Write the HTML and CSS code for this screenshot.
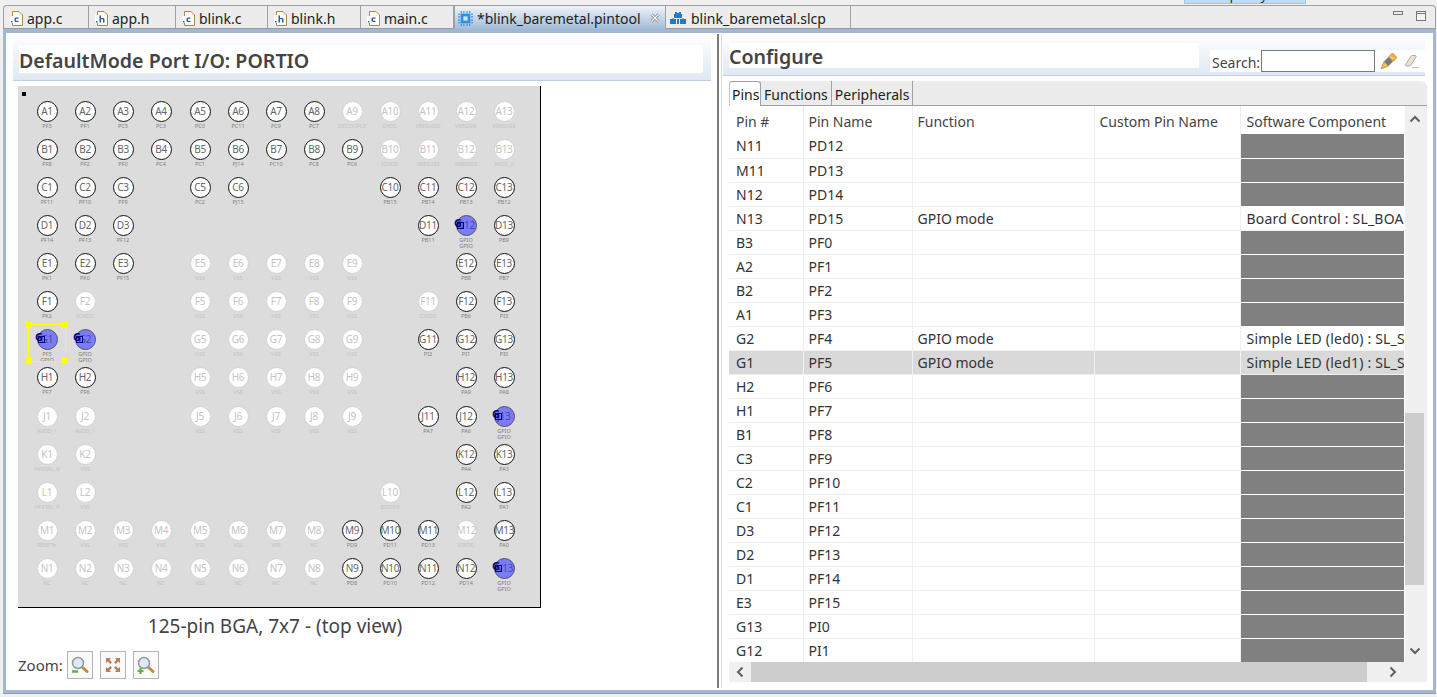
FILE: index.html
```html
<!DOCTYPE html>
<html lang="en">
<head>
  <meta charset="UTF-8" />
  <title>blink_baremetal.pintool</title>
  <link rel="stylesheet" href="styles.css">
</head>
<body>
  <svg class="defs" width="0" height="0">
    <symbol id="file-c" viewBox="0 0 13 15">
      <path d="M2.500 .5H9L12.500 4V14.500H2.500Z" fill="#fffdf2" stroke="#a98b45"/>
      <rect x="0" y="5" width="11" height="7" fill="#fff"/>
      <path d="M1 10h1.500v1.500H1zM8.500 6.500H5.500L4.500 7.500V10L5.500 11H8.500V9.800H6V7.700H8.500Z" fill="#2c5f9e"/>
    </symbol>
    <symbol id="file-h" viewBox="0 0 13 15">
      <path d="M2.500 .5H9L12.500 4V14.500H2.500Z" fill="#fffdf2" stroke="#a98b45"/>
      <rect x="0" y="4" width="11" height="8" fill="#fff"/>
      <path d="M1 10h1.500v1.500H1zM4.500 4.500H6V7H8.500L9.500 8V11.500H8V8.300H6V11.500H4.500Z" fill="#2c5f9e"/>
    </symbol>
  </svg>

  <div class="top-strip">
    <div class="perspective"><span>Simplicity IDE</span></div>
  </div>

  <div class="tab-bar">
    <div class="tab tab-c"><svg class="tab-icon"><use href="#file-c"/></svg>app.c</div>
    <div class="tab tab-h"><svg class="tab-icon"><use href="#file-h"/></svg>app.h</div>
    <div class="tab tab-bc"><svg class="tab-icon"><use href="#file-c"/></svg>blink.c</div>
    <div class="tab tab-bh"><svg class="tab-icon"><use href="#file-h"/></svg>blink.h</div>
    <div class="tab tab-m"><svg class="tab-icon"><use href="#file-c"/></svg>main.c</div>
    <div class="tab tab-active">
      <svg class="tab-icon chip" viewBox="0 0 14 14">
        <rect x="2.500" y="2.500" width="9" height="9" fill="#2f8fdc"/>
        <rect x="5" y="5" width="4" height="4" fill="#cfe6f8"/>
        <path d="M3 0v2M5.500 0v2M8.500 0v2M11 0v2M3 12v2M5.500 12v2M8.500 12v2M11 12v2M0 3h2M0 5.500h2M0 8.500h2M0 11h2M12 3h2M12 5.500h2M12 8.500h2M12 11h2" stroke="#2f8fdc"/>
      </svg>
      *blink_baremetal.pintool
      <svg class="tab-close" viewBox="0 0 10 10">
        <path d="M1.500 1.500L8.500 8.500M8.500 1.500L1.500 8.500" stroke="#8a8a8a" stroke-width="3"/>
        <path d="M1.500 1.500L8.500 8.500M8.500 1.500L1.500 8.500" stroke="#f4f7fa" stroke-width="1.200"/>
      </svg>
    </div>
    <div class="tab tab-slcp">
      <svg class="tab-icon lego" viewBox="0 0 16 12">
        <path d="M5 0h2v1h2V0h2v2h1v4H4V2h1ZM0 7h2v-.500h2V7h2v5H0ZM10 7h2v-.500h2V7h2v5h-6ZM7 7h2v5H7Z" fill="#1c7cc9"/>
      </svg>
      blink_baremetal.slcp
    </div>
    <div class="window-controls">
      <svg width="10" height="5"><rect x=".5" y=".5" width="9" height="3" fill="#eee" stroke="#777"/></svg>
      <svg width="10" height="10"><rect x=".5" y=".5" width="9" height="9" fill="#f4f4f4" stroke="#777"/><path d="M0 2.500h10" stroke="#777"/></svg>
    </div>
  </div>

  <div class="editor">
    <section class="pane-left">
      <div class="form-head"><h2>DefaultMode Port I/O: PORTIO</h2></div>

      <div class="board">
        <div class="pin-one"></div>
        <div class="pin-grid">
          <div class="pin on"><b>A1</b><span>PF3</span></div>
          <div class="pin on"><b>A2</b><span>PF1</span></div>
          <div class="pin on"><b>A3</b><span>PC5</span></div>
          <div class="pin on"><b>A4</b><span>PC3</span></div>
          <div class="pin on"><b>A5</b><span>PC0</span></div>
          <div class="pin on"><b>A6</b><span>PC11</span></div>
          <div class="pin on"><b>A7</b><span>PC9</span></div>
          <div class="pin on"><b>A8</b><span>PC7</span></div>
          <div class="pin"><b>A9</b><span>DECOUPLE</span></div>
          <div class="pin"><b>A10</b><span>DVDD</span></div>
          <div class="pin"><b>A11</b><span>VREGVDD</span></div>
          <div class="pin"><b>A12</b><span>VREGSW</span></div>
          <div class="pin"><b>A13</b><span>VREGVSS</span></div>

          <div class="pin on"><b>B1</b><span>PF8</span></div>
          <div class="pin on"><b>B2</b><span>PF2</span></div>
          <div class="pin on"><b>B3</b><span>PF0</span></div>
          <div class="pin on"><b>B4</b><span>PC4</span></div>
          <div class="pin on"><b>B5</b><span>PC1</span></div>
          <div class="pin on"><b>B6</b><span>PJ14</span></div>
          <div class="pin on"><b>B7</b><span>PC10</span></div>
          <div class="pin on"><b>B8</b><span>PC8</span></div>
          <div class="pin on"><b>B9</b><span>PC6</span></div>
          <div class="pin"><b>B10</b><span>IOVDD</span></div>
          <div class="pin"><b>B11</b><span>VREGVSS</span></div>
          <div class="pin"><b>B12</b><span>VREGVSS</span></div>
          <div class="pin"><b>B13</b><span>AVDD_0</span></div>

          <div class="pin on"><b>C1</b><span>PF11</span></div>
          <div class="pin on"><b>C2</b><span>PF10</span></div>
          <div class="pin on"><b>C3</b><span>PF9</span></div>
          <i></i>
          <div class="pin on"><b>C5</b><span>PC2</span></div>
          <div class="pin on"><b>C6</b><span>PJ15</span></div>
          <i></i><i></i><i></i>
          <div class="pin on"><b>C10</b><span>PB15</span></div>
          <div class="pin on"><b>C11</b><span>PB14</span></div>
          <div class="pin on"><b>C12</b><span>PB13</span></div>
          <div class="pin on"><b>C13</b><span>PB12</span></div>

          <div class="pin on"><b>D1</b><span>PF14</span></div>
          <div class="pin on"><b>D2</b><span>PF13</span></div>
          <div class="pin on"><b>D3</b><span>PF12</span></div>
          <i></i><i></i><i></i><i></i><i></i><i></i><i></i>
          <div class="pin on"><b>D11</b><span>PB11</span></div>
          <div class="pin gpio"><em>G</em><b>D12</b><span>GPIO<br>GPIO</span></div>
          <div class="pin on"><b>D13</b><span>PB9</span></div>

          <div class="pin on"><b>E1</b><span>PK1</span></div>
          <div class="pin on"><b>E2</b><span>PK0</span></div>
          <div class="pin on"><b>E3</b><span>PF15</span></div>
          <i></i>
          <div class="pin"><b>E5</b><span>VSS</span></div>
          <div class="pin"><b>E6</b><span>VSS</span></div>
          <div class="pin"><b>E7</b><span>VSS</span></div>
          <div class="pin"><b>E8</b><span>VSS</span></div>
          <div class="pin"><b>E9</b><span>VSS</span></div>
          <i></i><i></i>
          <div class="pin on"><b>E12</b><span>PB8</span></div>
          <div class="pin on"><b>E13</b><span>PB7</span></div>

          <div class="pin on"><b>F1</b><span>PK2</span></div>
          <div class="pin"><b>F2</b><span>IOVDD</span></div>
          <i></i><i></i>
          <div class="pin"><b>F5</b><span>VSS</span></div>
          <div class="pin"><b>F6</b><span>VSS</span></div>
          <div class="pin"><b>F7</b><span>VSS</span></div>
          <div class="pin"><b>F8</b><span>VSS</span></div>
          <div class="pin"><b>F9</b><span>VSS</span></div>
          <i></i>
          <div class="pin"><b>F11</b><span>IOVDD</span></div>
          <div class="pin on"><b>F12</b><span>PB6</span></div>
          <div class="pin on"><b>F13</b><span>PI3</span></div>

          <div class="pin gpio"><em>G</em><b>G1</b><span>PF5<br>GPIO</span></div>
          <div class="pin gpio"><em>G</em><b>G2</b><span>GPIO<br>GPIO</span></div>
          <i></i><i></i>
          <div class="pin"><b>G5</b><span>VSS</span></div>
          <div class="pin"><b>G6</b><span>VSS</span></div>
          <div class="pin"><b>G7</b><span>VSS</span></div>
          <div class="pin"><b>G8</b><span>VSS</span></div>
          <div class="pin"><b>G9</b><span>VSS</span></div>
          <i></i>
          <div class="pin on"><b>G11</b><span>PI2</span></div>
          <div class="pin on"><b>G12</b><span>PI1</span></div>
          <div class="pin on"><b>G13</b><span>PI0</span></div>

          <div class="pin on"><b>H1</b><span>PF7</span></div>
          <div class="pin on"><b>H2</b><span>PF6</span></div>
          <i></i><i></i>
          <div class="pin"><b>H5</b><span>VSS</span></div>
          <div class="pin"><b>H6</b><span>VSS</span></div>
          <div class="pin"><b>H7</b><span>VSS</span></div>
          <div class="pin"><b>H8</b><span>VSS</span></div>
          <div class="pin"><b>H9</b><span>VSS</span></div>
          <i></i><i></i>
          <div class="pin on"><b>H12</b><span>PA9</span></div>
          <div class="pin on"><b>H13</b><span>PA8</span></div>

          <div class="pin"><b>J1</b><span>AVDD_1</span></div>
          <div class="pin"><b>J2</b><span>AVDD_1</span></div>
          <i></i><i></i>
          <div class="pin"><b>J5</b><span>VSS</span></div>
          <div class="pin"><b>J6</b><span>VSS</span></div>
          <div class="pin"><b>J7</b><span>VSS</span></div>
          <div class="pin"><b>J8</b><span>VSS</span></div>
          <div class="pin"><b>J9</b><span>VSS</span></div>
          <i></i>
          <div class="pin on"><b>J11</b><span>PA7</span></div>
          <div class="pin on"><b>J12</b><span>PA6</span></div>
          <div class="pin gpio"><em>G</em><b>J13</b><span>GPIO<br>GPIO</span></div>

          <div class="pin"><b>K1</b><span>HFXTAL_N</span></div>
          <div class="pin"><b>K2</b><span>VSS</span></div>
          <i></i><i></i><i></i><i></i><i></i><i></i><i></i><i></i><i></i>
          <div class="pin on"><b>K12</b><span>PA4</span></div>
          <div class="pin on"><b>K13</b><span>PA3</span></div>

          <div class="pin"><b>L1</b><span>HFXTAL_P</span></div>
          <div class="pin"><b>L2</b><span>VSS</span></div>
          <i></i><i></i><i></i><i></i><i></i><i></i><i></i>
          <div class="pin"><b>L10</b><span>BODEN</span></div>
          <i></i>
          <div class="pin on"><b>L12</b><span>PA2</span></div>
          <div class="pin on"><b>L13</b><span>PA1</span></div>

          <div class="pin"><b>M1</b><span>RESETn</span></div>
          <div class="pin"><b>M2</b><span>VSS</span></div>
          <div class="pin"><b>M3</b><span>VSS</span></div>
          <div class="pin"><b>M4</b><span>VSS</span></div>
          <div class="pin"><b>M5</b><span>VSS</span></div>
          <div class="pin"><b>M6</b><span>VSS</span></div>
          <div class="pin"><b>M7</b><span>VSS</span></div>
          <div class="pin"><b>M8</b><span>NC</span></div>
          <div class="pin on"><b>M9</b><span>PD9</span></div>
          <div class="pin on"><b>M10</b><span>PD11</span></div>
          <div class="pin on"><b>M11</b><span>PD13</span></div>
          <div class="pin"><b>M12</b><span>IOVDD</span></div>
          <div class="pin on"><b>M13</b><span>PA0</span></div>

          <div class="pin"><b>N1</b><span>NC</span></div>
          <div class="pin"><b>N2</b><span>NC</span></div>
          <div class="pin"><b>N3</b><span>NC</span></div>
          <div class="pin"><b>N4</b><span>NC</span></div>
          <div class="pin"><b>N5</b><span>VSS</span></div>
          <div class="pin"><b>N6</b><span>NC</span></div>
          <div class="pin"><b>N7</b><span>NC</span></div>
          <div class="pin"><b>N8</b><span>NC</span></div>
          <div class="pin on"><b>N9</b><span>PD8</span></div>
          <div class="pin on"><b>N10</b><span>PD10</span></div>
          <div class="pin on"><b>N11</b><span>PD12</span></div>
          <div class="pin on"><b>N12</b><span>PD14</span></div>
          <div class="pin gpio"><em>G</em><b>N13</b><span>GPIO<br>GPIO</span></div>
        </div>

        <div class="selection">
          <s class="h-tl"></s><s class="h-tr"></s><s class="h-bl"></s><s class="h-br"></s>
        </div>
      </div>

      <p class="caption">125-pin BGA, 7x7 - (top view)</p>

      <div class="zoom-row">
        <span>Zoom:</span>
        <button class="zoom-btn">
          <svg width="18" height="18" viewBox="0 0 18 18">
            <path d="M10.500 10.500L16 15.500" stroke="#c58a3d" stroke-width="3" stroke-linecap="round"/>
            <circle cx="7" cy="7" r="5.500" fill="#dfe9f2" stroke="#8f9aa5" stroke-width="1.500"/>
            <path d="M1 15.500h6" stroke="#5fb53a" stroke-width="2.500"/>
          </svg>
        </button>
        <button class="zoom-btn">
          <svg width="16" height="16" viewBox="0 0 16 16" fill="#bd7d58">
            <path d="M1 1h5L4.500 2.800 7 5.300 5.300 7 2.800 4.500 1 6ZM15 1v5L13.200 4.500 10.700 7 9 5.300 11.500 2.800 10 1ZM1 15v-5L2.800 11.500 5.300 9 7 10.700 4.500 13.200 6 15ZM15 15h-5L11.500 13.200 9 10.700 10.700 9 13.200 11.500 15 10Z"/>
          </svg>
        </button>
        <button class="zoom-btn">
          <svg width="18" height="18" viewBox="0 0 18 18">
            <path d="M10.500 10.500L16 15.500" stroke="#c58a3d" stroke-width="3" stroke-linecap="round"/>
            <circle cx="7" cy="7" r="5.500" fill="#dfe9f2" stroke="#8f9aa5" stroke-width="1.500"/>
            <path d="M0.500 15h6M3.500 12v6" stroke="#5fb53a" stroke-width="2.200"/>
          </svg>
        </button>
      </div>
    </section>

    <div class="sash"></div>

    <section class="pane-right">
      <div class="config-head">
        <h2>Configure</h2>
        <div class="search">
          <label for="pinSearch">Search:</label>
          <input type="text" id="pinSearch" />
          <svg class="search-tool" width="16" height="16" viewBox="0 0 16 16">
            <path d="M0 16L3 8.500 7.500 13Z" fill="#f2c14e" stroke="#b5792a" stroke-width=".7"/>
            <path d="M3 8.500L7.500 4 12 8.500 7.500 13Z" fill="#77787c"/>
            <path d="M7.500 4L11.500 0 16 4.500 12 8.500Z" fill="#eeb04a" stroke="#b5792a" stroke-width=".7"/>
            <path d="M10 3.500L12.500 6" stroke="#fff3cf"/>
          </svg>
          <svg class="search-clear" width="14" height="13" viewBox="0 0 14 13">
            <path d="M.5 10L6 1Q6.500 .5 7.500 .5H10.500Q11.500 1 11 2L6 10Q5.500 11 4.500 11H1.500Q0 11 .5 10Z" fill="#e8e2d8" stroke="#b4aa9a"/>
            <path d="M7 12.500h7" stroke="#c4bcac"/>
          </svg>
        </div>
      </div>

      <div class="folder">
        <div class="folder-tabs">
          <div class="ftab ftab-active">Pins</div>
          <div class="ftab">Functions</div>
          <div class="ftab">Peripherals</div>
        </div>
        <div class="folder-body">
          <table class="pin-table">
            <colgroup>
              <col class="col-pin"><col class="col-name"><col class="col-func"><col class="col-custom"><col class="col-soft">
            </colgroup>
            <thead>
              <tr><th>Pin #</th><th>Pin Name</th><th>Function</th><th>Custom Pin Name</th><th>Software Component</th></tr>
            </thead>
            <tbody>
              <tr><td>N11</td><td>PD12</td><td></td><td></td><td class="off"></td></tr>
              <tr><td>M11</td><td>PD13</td><td></td><td></td><td class="off"></td></tr>
              <tr><td>N12</td><td>PD14</td><td></td><td></td><td class="off"></td></tr>
              <tr><td>N13</td><td>PD15</td><td>GPIO mode</td><td></td><td>Board Control : SL_BOARD_ENABLE</td></tr>
              <tr><td>B3</td><td>PF0</td><td></td><td></td><td class="off"></td></tr>
              <tr><td>A2</td><td>PF1</td><td></td><td></td><td class="off"></td></tr>
              <tr><td>B2</td><td>PF2</td><td></td><td></td><td class="off"></td></tr>
              <tr><td>A1</td><td>PF3</td><td></td><td></td><td class="off"></td></tr>
              <tr><td>G2</td><td>PF4</td><td>GPIO mode</td><td></td><td>Simple LED (led0) : SL_SIMPLE_LED</td></tr>
              <tr class="selected"><td>G1</td><td>PF5</td><td>GPIO mode</td><td></td><td>Simple LED (led1) : SL_SIMPLE_LED</td></tr>
              <tr><td>H2</td><td>PF6</td><td></td><td></td><td class="off"></td></tr>
              <tr><td>H1</td><td>PF7</td><td></td><td></td><td class="off"></td></tr>
              <tr><td>B1</td><td>PF8</td><td></td><td></td><td class="off"></td></tr>
              <tr><td>C3</td><td>PF9</td><td></td><td></td><td class="off"></td></tr>
              <tr><td>C2</td><td>PF10</td><td></td><td></td><td class="off"></td></tr>
              <tr><td>C1</td><td>PF11</td><td></td><td></td><td class="off"></td></tr>
              <tr><td>D3</td><td>PF12</td><td></td><td></td><td class="off"></td></tr>
              <tr><td>D2</td><td>PF13</td><td></td><td></td><td class="off"></td></tr>
              <tr><td>D1</td><td>PF14</td><td></td><td></td><td class="off"></td></tr>
              <tr><td>E3</td><td>PF15</td><td></td><td></td><td class="off"></td></tr>
              <tr><td>G13</td><td>PI0</td><td></td><td></td><td class="off"></td></tr>
              <tr><td>G12</td><td>PI1</td><td></td><td></td><td class="off"></td></tr>
            </tbody>
          </table>
          <div class="vscroll">
            <svg class="arrow" width="12" height="8" viewBox="0 0 12 8"><path d="M1.500 6.500L6 2 10.500 6.500" fill="none" stroke="#606060" stroke-width="2"/></svg>
            <div class="vthumb"></div>
            <svg class="arrow arrow-down" width="12" height="8" viewBox="0 0 12 8"><path d="M1.500 1.500L6 6 10.500 1.500" fill="none" stroke="#606060" stroke-width="2"/></svg>
          </div>
          <div class="hscroll">
            <svg width="8" height="12" viewBox="0 0 8 12"><path d="M6.500 1.500L2 6 6.500 10.500" fill="none" stroke="#606060" stroke-width="2"/></svg>
            <div class="hthumb"></div>
            <svg width="8" height="12" viewBox="0 0 8 12"><path d="M1.500 1.500L6 6 1.500 10.500" fill="none" stroke="#606060" stroke-width="2"/></svg>
          </div>
        </div>
      </div>
    </section>
  </div>
</body>
</html>
```

FILE: styles.css
```css
* {
  box-sizing: border-box;
}

body {
  margin: 0;
  width: 1437px;
  height: 697px;
  overflow: hidden;
  background-color: #f0f0f0;
  color: #333333;
  font-family: "Noto Sans", "Open Sans", sans-serif;
  font-size: 14px;
}

.defs {
  position: absolute;
}

/* top strip, mostly cut off by the window edge */
.top-strip {
  height: 5px;
  display: flex;
  justify-content: flex-end;
  padding-right: 131px;
}

.perspective {
  width: 122px;
  height: 4px;
  overflow: hidden;
  background-color: #bfdcf5;
  border: 1px solid #91c9f7;
  border-top: none;
  padding-left: 20px;
}

.perspective span {
  display: block;
  margin-top: -15px;
  line-height: 18px;
  white-space: nowrap;
}

/* editor tabs */
.tab-bar {
  height: 24px;
  margin: 0 1px 0 3px;
  display: flex;
  background-color: #ececec;
  border: 1px solid #a0a0a0;
  border-bottom: none;
  border-radius: 4px 4px 0 0;
}

.tab {
  display: flex;
  align-items: center;
  padding: 1px 0 0 6px;
  border-right: 1px solid #a0a0a0;
  white-space: nowrap;
  color: #222222;
}

.tab-c { width: 85px; }
.tab-h { width: 87px; }
.tab-bc { width: 92px; }
.tab-bh { width: 93px; }
.tab-m { width: 93px; }
.tab-active {
  width: 212px;
  background: linear-gradient(#eef3f9, #a3bcd8);
  padding-left: 3px;
  border-left: 1px solid #a0a0a0;
}
.tab-slcp { width: 185px; padding-left: 4px; }

.tab-icon {
  width: 13px;
  height: 15px;
  margin-right: 4px;
  flex: none;
}

.chip {
  width: 15px;
  height: 15px;
  margin-right: 4px;
}

.lego {
  width: 16px;
  height: 12px;
  margin-right: 5px;
}

.tab-close {
  width: 10px;
  height: 10px;
  margin-left: 9px;
}

.window-controls {
  margin-left: auto;
  display: flex;
  align-items: flex-start;
  gap: 13px;
  padding: 5px 9px 0 0;
}

/* editor frame */
.editor {
  height: 664px;
  margin: 0 1px 0 3px;
  display: flex;
  background-color: #ffffff;
  border: 3px solid #a0b8d4;
  border-top: 4px solid #a0b8d4;
  box-shadow: 0 -1px 0 #9a9a9a, 0 1px 0 #9a9a9a;
}

.pane-left {
  width: 711px;
  padding: 0 6px 0 7px;
  flex: none;
}

.form-head {
  height: 48px;
  padding: 12px 8px 7px 6px;
  background: linear-gradient(#ffffff, #dfe8f2);
  border-bottom: 1px solid #b9d0e6;
}

.form-head h2 {
  margin: 0;
  height: 28px;
  background-color: #ffffff;
  color: #444444;
  font-size: 19.600px;
  line-height: 32px;
  font-weight: 600;
}

/* pin diagram */
.board {
  position: relative;
  width: 523px;
  height: 522px;
  margin: 5px 0 0 5px;
  background-color: #dcdcdc;
  border-right: 1px solid #000000;
  border-bottom: 1px solid #000000;
}

.pin-one {
  position: absolute;
  left: 4px;
  top: 6px;
  width: 4px;
  height: 4px;
  background-color: #000000;
}

.pin-grid {
  display: grid;
  grid-template-columns: 38px 38px 38px 39px repeat(9, 38px);
  grid-template-rows: repeat(7, 38px) 39px repeat(5, 38px);
  padding: 15px 0 0 10px;
}

.pin {
  position: relative;
  width: 38px;
  display: flex;
  flex-direction: column;
  align-items: center;
  white-space: nowrap;
}

.pin b {
  width: 21px;
  height: 21px;
  border-radius: 50%;
  border: 1.500px solid #d2d2d2;
  background-color: #ffffff;
  color: #c4c4c4;
  font-size: 10px;
  font-weight: 400;
  line-height: 18px;
  text-align: center;
  letter-spacing: -0.3px;
}

.pin span {
  margin-top: 2px;
  color: #c2c2c2;
  font-size: 5.500px;
  line-height: 5.500px;
  text-align: center;
}

.pin.on b {
  border: 1.800px solid #111111;
  color: #666666;
}

.pin.on span,
.pin.gpio span {
  color: #808080;
}

.pin.gpio b {
  border-color: #555555;
  background-color: #7b7bff;
  color: #4a4a90;
}

.pin.gpio em {
  position: absolute;
  left: 7px;
  top: 3px;
  width: 8px;
  color: #000080;
  font-size: 11px;
  font-style: normal;
  font-weight: 700;
  line-height: 10px;
}

.pin.gpio em::after {
  content: "";
  position: absolute;
  left: 3px;
  top: 4px;
  width: 5px;
  height: 5px;
  border: 1px solid #000080;
}

.selection {
  position: absolute;
  left: 10px;
  top: 238px;
  width: 38px;
  height: 38px;
  border: 1px solid #ffff00;
}

.selection s {
  position: absolute;
  width: 6px;
  height: 6px;
  background-color: #ffff00;
}

.h-tl { left: -3px; top: -3px; }
.h-tr { right: -3px; top: -3px; }
.h-bl { left: -3px; bottom: -3px; }
.h-br { right: -3px; bottom: -3px; }

.caption {
  width: 514px;
  margin: 6px 0 0 5px;
  text-align: center;
  color: #444444;
  font-size: 19px;
  line-height: 24px;
}

.zoom-row {
  display: flex;
  align-items: center;
  margin: 13px 0 0 5px;
  color: #444444;
  font-size: 15px;
}

.zoom-row span {
  width: 49px;
}

.zoom-btn {
  width: 26px;
  height: 28px;
  margin-right: 7px;
  padding: 0;
  display: flex;
  align-items: center;
  justify-content: center;
  background-color: #fafafa;
  border: 1px solid #b4b4b4;
}

.sash {
  width: 5px;
  flex: none;
  margin-top: 1px;
  margin-bottom: 2px;
  border-left: 2px solid #7d7d7d;
  border-right: 1px solid #d8d8d8;
}

/* right side */
.pane-right {
  flex: 1;
  min-width: 0;
}

.config-head {
  height: 43px;
  margin: 0 8px 0 1px;
  padding: 0 0 3px 6px;
  display: flex;
  justify-content: space-between;
  align-items: flex-end;
  background: linear-gradient(#ffffff, #dfe8f2);
  border-bottom: 1px solid #c4d2e0;
}

.config-head h2 {
  width: 470px;
  height: 25px;
  margin: 0 0 4px;
  background-color: #ffffff;
  color: #444444;
  font-size: 19.600px;
  line-height: 27px;
  font-weight: 600;
}

.search {
  width: 215px;
  height: 22px;
  display: flex;
  align-items: center;
  padding-left: 2px;
  background-color: #ffffff;
  color: #444444;
}

.search label {
  padding-top: 3px;
}

.search input {
  width: 114px;
  height: 22px;
  margin: 0 6px 0 1px;
  border: 1px solid #7a7a7a;
}

.search-tool {
  margin-right: 8px;
}

.folder {
  width: 698px;
  margin: 5px 0 0 7px;
}

.folder-tabs {
  height: 25px;
  display: flex;
  background-color: #ececec;
  border-bottom: 1px solid #a0a0a0;
  border-radius: 0 6px 0 0;
}

.ftab {
  padding: 0 3px;
  line-height: 28px;
  border-right: 1px solid #a0a0a0;
  color: #222222;
}

.ftab-active {
  width: 32px;
  height: 25px;
  padding: 0 2px;
  background-color: #ffffff;
  border-top: 1px solid #a0a0a0;
  border-left: 1px solid #c8c8c8;
  line-height: 26px;
  border-radius: 3px 3px 0 0;
}

.folder-body {
  display: grid;
  grid-template-columns: 676px 22px;
  grid-template-rows: 556px 20px;
}

.pin-table {
  width: 675px;
  table-layout: fixed;
  border-collapse: collapse;
  color: #333333;
}

.col-pin { width: 74px; }
.col-name { width: 109px; }
.col-func { width: 182px; }
.col-custom { width: 146px; }
.col-soft { width: 164px; }

.pin-table th {
  height: 28px;
  padding: 2px 0 0 5px;
  font-weight: 400;
  text-align: left;
  color: #444444;
  border-right: 1px solid #ededed;
}

.pin-table td {
  height: 24px;
  padding: 0 0 0 5px;
  overflow: hidden;
  white-space: nowrap;
  border-bottom: 1px solid #f0f0f0;
  border-right: 1px solid #f0f0f0;
}

.pin-table td:last-child,
.pin-table th:last-child {
  padding-left: 6px;
  border-right: none;
}

.pin-table td:last-child {
  letter-spacing: 0.2px;
}

.pin-table td:first-child,
.pin-table th:first-child {
  padding-left: 7px;
}

.pin-table td.off {
  background-color: #808080;
  border-bottom: 1px solid #ffffff;
  border-left: 1px solid #ffffff;
}

.pin-table tr.selected td {
  background-color: #d9d9d9;
}

.vscroll {
  display: flex;
  flex-direction: column;
  align-items: center;
  padding-right: 3px;
  background-color: #f0f0f0;
}

.arrow {
  margin-top: 9px;
  flex: none;
}

.vthumb {
  width: 19px;
  height: 172px;
  margin-top: 290px;
  background-color: #cdcdcd;
}

.arrow-down {
  margin-top: 62px;
}

.hscroll {
  grid-column: 1 / 3;
  display: flex;
  align-items: center;
  padding: 0 30px 0 7px;
  background-color: #f0f0f0;
}

.hthumb {
  width: 616px;
  height: 20px;
  margin: 0 22px 0 7px;
  background-color: #cdcdcd;
}
```
